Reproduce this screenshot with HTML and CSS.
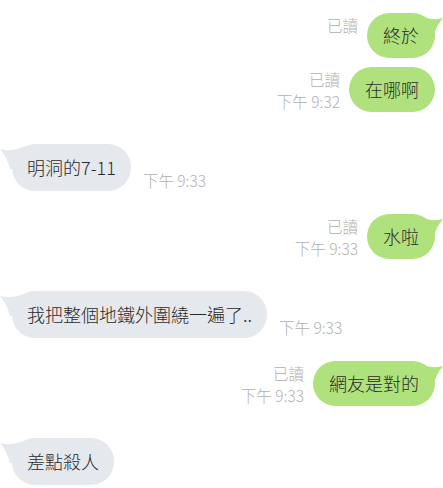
FILE: index.html
```html
<!DOCTYPE html>
<html lang="zh-Hant">
<head>
<meta charset="utf-8">
<title>chat</title>
<link rel="stylesheet" href="styles.css">
</head>
<body>
<div class="chat">
  <div class="row right first">
    <div class="meta"><span class="line">已讀</span><span class="line"></span></div>
    <div class="bubble green">終於<svg class="tail tail-r" width="24" height="24" viewBox="0 0 24 24"><path d="M0,1 Q14,6 24,3 Q17,11 14,23 L2,23 Z"/></svg></div>
  </div>
  <div class="row right cont">
    <div class="meta"><span class="line">已讀</span><span class="line">下午 9:32</span></div>
    <div class="bubble green">在哪啊</div>
  </div>
  <div class="row left">
    <div class="bubble gray">明洞的7-11<svg class="tail tail-l" width="24" height="24" viewBox="0 0 24 24"><path d="M24,1 Q10,6 0,3 Q7,11 10,23 L22,23 Z"/></svg></div>
    <div class="meta"><span class="line">下午 9:33</span></div>
  </div>
  <div class="row right first">
    <div class="meta"><span class="line">已讀</span><span class="line">下午 9:33</span></div>
    <div class="bubble green">水啦<svg class="tail tail-r" width="24" height="24" viewBox="0 0 24 24"><path d="M0,1 Q14,6 24,3 Q17,11 14,23 L2,23 Z"/></svg></div>
  </div>
  <div class="row left">
    <div class="bubble gray">我把整個地鐵外圍繞一遍了..<svg class="tail tail-l" width="24" height="24" viewBox="0 0 24 24"><path d="M24,1 Q10,6 0,3 Q7,11 10,23 L22,23 Z"/></svg></div>
    <div class="meta"><span class="line">下午 9:33</span></div>
  </div>
  <div class="row right first">
    <div class="meta"><span class="line">已讀</span><span class="line">下午 9:33</span></div>
    <div class="bubble green">網友是對的<svg class="tail tail-r" width="24" height="24" viewBox="0 0 24 24"><path d="M0,1 Q14,6 24,3 Q17,11 14,23 L2,23 Z"/></svg></div>
  </div>
  <div class="row left">
    <div class="bubble gray">差點殺人<svg class="tail tail-l" width="24" height="24" viewBox="0 0 24 24"><path d="M24,1 Q10,6 0,3 Q7,11 10,23 L22,23 Z"/></svg></div>
  </div>
</div>
</body>
</html>
```
FILE: styles.css
```css
* { box-sizing: border-box; }
html, body { margin: 0; padding: 0; background: #ffffff; }
body {
  font-family: "Noto Sans CJK TC", "Noto Sans", sans-serif;
  overflow: hidden;
}
.chat {
  display: flex;
  flex-direction: column;
  padding: 13px 8px 0 12px;
}
.row {
  display: flex;
  align-items: flex-end;
}
.row.right { justify-content: flex-end; gap: 9px; margin-top: 23px; }
.row.right.first:first-child { margin-top: 0; }
.row.right.cont { margin-top: 9px; }
.row.left { justify-content: flex-start; gap: 12px; margin-top: 32px; }
.bubble {
  position: relative;
  padding: 11px 16px;
  font-size: 18px;
  font-weight: 300;
  line-height: 23px;
  border-radius: 23px;
  color: #2a2a2a;
  white-space: nowrap;
}
.row.left .bubble { padding: 12px 15px; }
.green { background: #afe27d; }
.gray { background: #e5e8ec; }
.tail { position: absolute; top: 2px; }
.tail-r { right: -8px; }
.tail-l { left: -12px; }
.green .tail path { fill: #afe27d; }
.gray .tail path { fill: #e5e8ec; }
.meta {
  display: flex;
  flex-direction: column;
  align-items: flex-end;
  font-size: 15.5px;
  font-weight: 300;
  line-height: 22px;
  color: #b0b0b0;
  white-space: nowrap;
}
.row.left .meta { align-items: flex-start; }
.line { display: block; height: 22px; }
```
